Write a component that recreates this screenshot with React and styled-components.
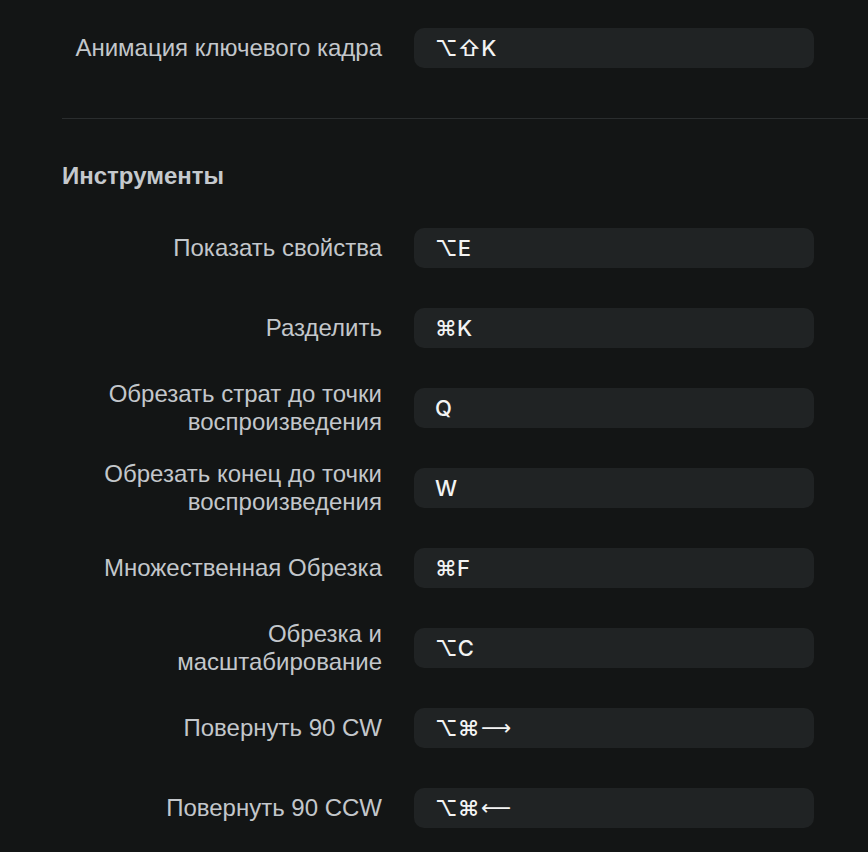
import React from "react";
import styled, { createGlobalStyle } from "styled-components";

const Global = createGlobalStyle`
  html, body { margin: 0; padding: 0; background: #131515; }
  body { font-family: "Liberation Sans", Arial, "DejaVu Sans", sans-serif; }
`;

const Page = styled.div`
  width: 868px;
  height: 852px;
  overflow: hidden;
  background: #131515;
  padding: 28px 0 0 62px;
  box-sizing: border-box;
`;

const Rows = styled.div`
  display: flex;
  flex-direction: column;
  gap: 40px;
`;

const Row = styled.div`
  display: grid;
  grid-template-columns: 320px 400px;
  grid-template-rows: 40px;
  column-gap: 32px;
  align-items: center;
`;

const Label = styled.div`
  text-align: right;
  color: #c3c7cb;
  font-size: 24px;
  line-height: 28px;
`;

const Field = styled.div`
  height: 40px;
  border-radius: 10px;
  background: #202324;
  display: flex;
  align-items: center;
  padding-left: 21px;
  color: #f2f3f3;
  font-family: Inter, "Liberation Sans", "DejaVu Sans", sans-serif;
  font-size: 22px;
  font-weight: 500;
  letter-spacing: 0.3px;
`;

const Arrow = styled.span`
  font-family: "DejaVu Sans", sans-serif;
  font-size: 21px;
  margin-left: 1px;
`;

const Divider = styled.hr`
  border: 0;
  height: 1px;
  background: #2a2d2e;
  margin: 50px 0 0 0;
`;

const Heading = styled.h2`
  margin: 45px 0 40px 0;
  font-size: 24px;
  line-height: 24px;
  font-weight: 700;
  color: #c5c9cd;
`;

const tools = [
  ["Показать свойства", "⌥E"],
  ["Разделить", "⌘K"],
  ["Обрезать страт до точки воспроизведения", "Q"],
  ["Обрезать конец до точки воспроизведения", "W"],
  ["Множественная Обрезка", "⌘F"],
  ["Обрезка и масштабирование", "⌥C"],
  ["Повернуть 90 CW", "⌥⌘", "⟶"],
  ["Повернуть 90 CCW", "⌥⌘", "⟵"],
];

const Shortcut = ({ label, keys, arrow }) => (
  <Row>
    <Label>{label}</Label>
    <Field>
      {keys}
      {arrow && <Arrow>{arrow}</Arrow>}
    </Field>
  </Row>
);

export default function App() {
  return (
    <Page>
      <Global />
      <Rows>
        <Shortcut label="Анимация ключевого кадра" keys="⌥⇧K" />
      </Rows>
      <Divider />
      <Heading>Инструменты</Heading>
      <Rows>
        {tools.map(([l, k, a]) => (
          <Shortcut key={l} label={l} keys={k} arrow={a} />
        ))}
      </Rows>
    </Page>
  );
}
